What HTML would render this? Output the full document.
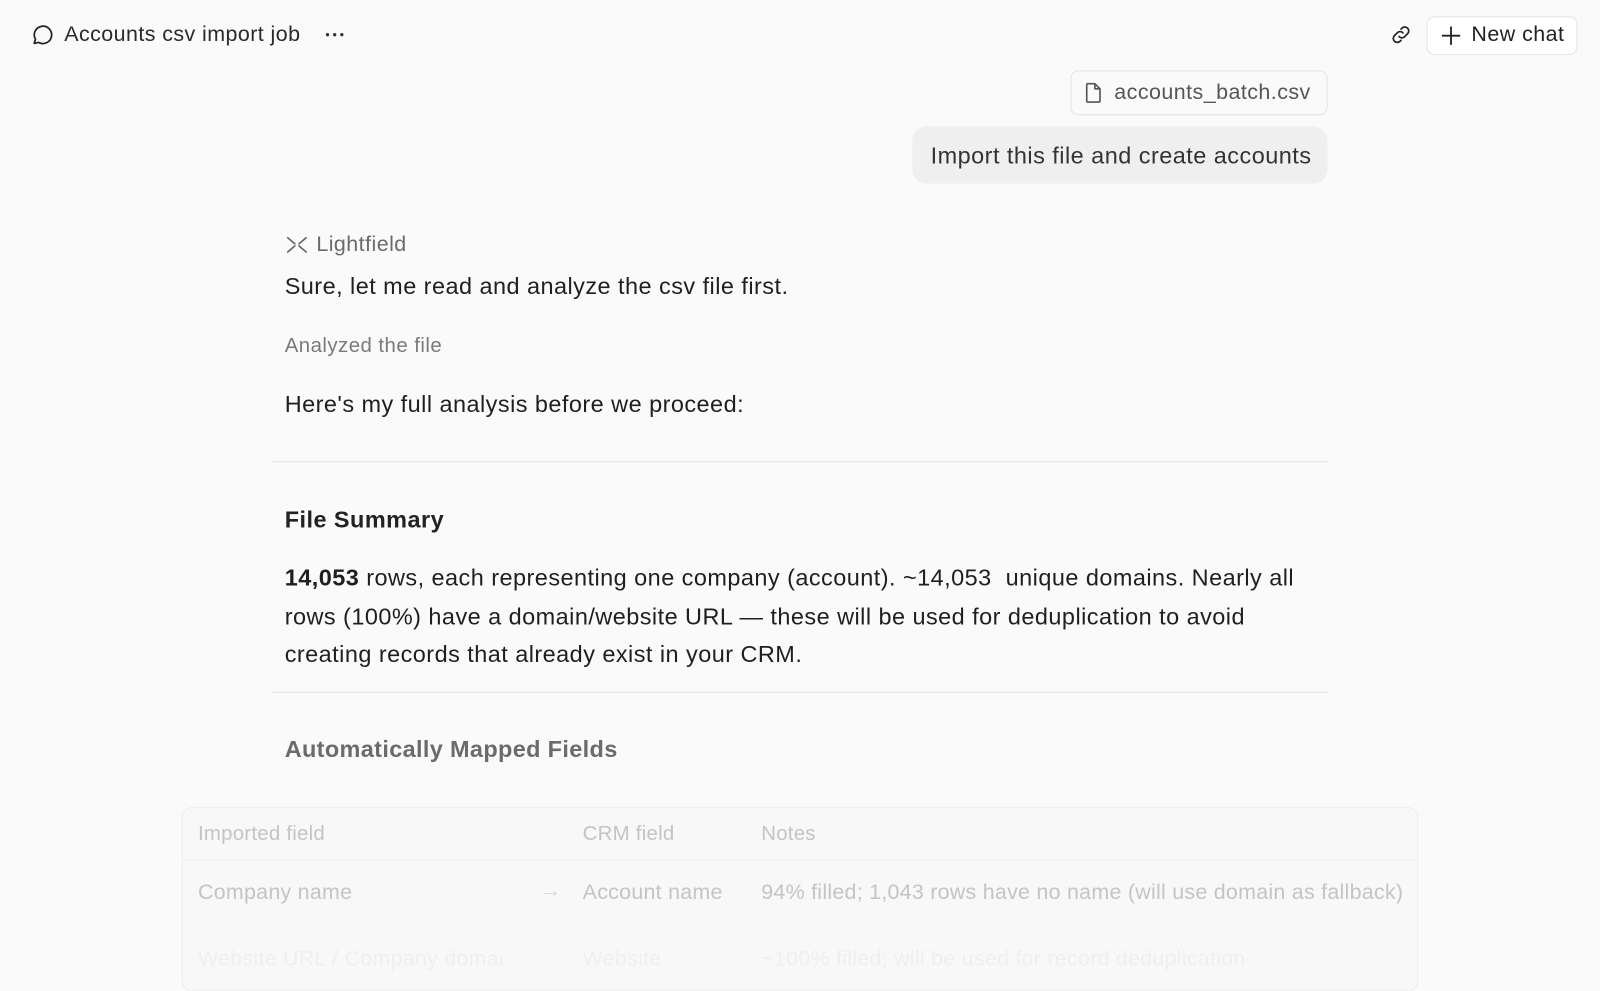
<!DOCTYPE html>
<html><head><meta charset="utf-8"><style>
*{box-sizing:border-box;margin:0;padding:0}
body{width:1600px;height:960px;overflow:hidden;background:#fafafa;font-family:"Liberation Sans",sans-serif;color:#1f1f1f;position:relative}
#w{position:absolute;left:0;top:0;width:1568px;height:941px;transform:scale(1.0204);transform-origin:0 0;letter-spacing:0.028em}
.abs{position:absolute;white-space:nowrap}
.btn{position:absolute;border:1px solid #e3e3e3;background:#fff;border-radius:8px}
.hr{position:absolute;left:266px;width:1036px;height:1px;background:#e2e2e2}
.p{font-size:23px;color:#1f1f1f}
.t{position:absolute;font-size:20px;color:#c4c4c4;letter-spacing:0.012em}
</style></head><body><div id="w">
<svg class="abs" style="left:30px;top:22px" width="24" height="24" viewBox="0 0 24 24" fill="none" stroke="#222" stroke-width="1.7" stroke-linejoin="round"><path d="M3.5 20.5l1.3-4A8.5 8.5 0 1 1 8 19.6z"/></svg>
<div class="abs" style="left:63px;top:22px;font-size:21px;color:#2a2a2a;letter-spacing:0.02em">Accounts csv import job</div>
<svg class="abs" style="left:318px;top:31px" width="20" height="6" viewBox="0 0 20 6" fill="#333"><circle cx="3" cy="3" r="1.6"/><circle cx="10" cy="3" r="1.6"/><circle cx="17" cy="3" r="1.6"/></svg>
<svg class="abs" style="left:1362px;top:23px" width="22" height="22" viewBox="0 0 24 24" fill="none" stroke="#222" stroke-width="1.8" stroke-linecap="round"><path d="M10 14a4 4 0 0 0 6 0l3-3a4 4 0 0 0-6-6l-1 1"/><path d="M14 10a4 4 0 0 0-6 0l-3 3a4 4 0 0 0 6 6l1-1"/></svg>
<div class="btn" style="left:1398px;top:16px;width:148px;height:38px"></div>
<svg class="abs" style="left:1411px;top:24px" width="22" height="22" viewBox="0 0 22 22" stroke="#222" stroke-width="1.8"><path d="M11 2v18M2 11h18"/></svg>
<div class="abs" style="left:1442px;top:22px;font-size:21px;color:#222">New chat</div>
<div class="btn" style="left:1049px;top:69px;width:252px;height:44px;background:#fafafa"></div>
<svg class="abs" style="left:1062px;top:80px" width="20" height="22" viewBox="0 0 20 22" fill="none" stroke="#555" stroke-width="1.6" stroke-linejoin="round"><path d="M4 2h7l5 5v12a1 1 0 0 1-1 1H4a1 1 0 0 1-1-1V3a1 1 0 0 1 1-1z"/><path d="M11 2v5h5"/></svg>
<div class="abs" style="left:1092px;top:79px;font-size:21px;color:#555">accounts_batch.csv</div>
<div class="abs" style="left:894px;top:124px;width:407px;height:56px;background:#efefef;border-radius:14px"></div>
<div class="abs" style="left:912px;top:139px;font-size:23px;color:#333;letter-spacing:0.02em">Import this file and create accounts</div>
<svg class="abs" style="left:280px;top:229px" width="22" height="22" viewBox="0 0 22 22" fill="none" stroke="#666" stroke-width="1.6" stroke-linecap="round"><path d="M2 4l7 6M2 18l7-6M20 4l-7 6M20 18l-7-6"/></svg>
<div class="abs" style="left:310px;top:228px;font-size:21px;color:#6a6a6a">Lightfield</div>
<div class="abs p" style="left:279px;top:267px">Sure, let me read and analyze the csv file first.</div>
<div class="abs" style="left:279px;top:328px;font-size:20px;color:#7a7a7a">Analyzed the file</div>
<div class="abs p" style="left:279px;top:383px">Here's my full analysis before we proceed:</div>
<div class="hr" style="top:452px"></div>
<div class="abs" style="left:279px;top:496px;font-size:23px;font-weight:bold;color:#222">File Summary</div>
<div class="abs p" style="left:279px;top:548px;line-height:37.5px;white-space:normal;width:1015px"><b>14,053</b> rows, each representing one company (account). ~14,053&nbsp; unique domains. Nearly all rows (100%) have a domain/website URL — these will be used for deduplication to avoid creating records that already exist in your CRM.</div>
<div class="hr" style="top:678px"></div>
<div class="abs" style="left:279px;top:721px;font-size:23px;font-weight:bold;color:#6b6b6b;letter-spacing:0.015em">Automatically Mapped Fields</div>
<div class="abs" style="left:178px;top:791px;width:1212px;height:180px;border:1px solid #ededed;border-radius:10px;background:#f8f8f8"></div>
<div class="abs" style="left:179px;top:842px;width:1210px;height:1px;background:#efefef"></div>
<div class="abs" style="left:179px;top:907px;width:1210px;height:1px;background:#f3f3f3"></div>
<div class="t" style="left:194px;top:806px">Imported field</div>
<div class="t" style="left:571px;top:806px">CRM field</div>
<div class="t" style="left:746px;top:806px">Notes</div>
<div class="t" style="left:194px;top:863px;font-size:21px">Company name</div>
<div class="t" style="left:529px;top:861px;font-size:21px;color:#d8d8d8">→</div>
<div class="t" style="left:571px;top:863px;font-size:21px">Account name</div>
<div class="t" style="left:746px;top:863px;font-size:21px">94% filled; 1,043 rows have no name (will use domain as fallback)</div>
<div class="t" style="left:194px;top:928px;font-size:21px;color:#efefef">Website URL / Company domai</div>
<div class="t" style="left:571px;top:928px;font-size:21px;color:#efefef">Website</div>
<div class="t" style="left:746px;top:928px;font-size:21px;color:#efefef">~100% filled; will be used for record deduplication</div>
</div></body></html>
